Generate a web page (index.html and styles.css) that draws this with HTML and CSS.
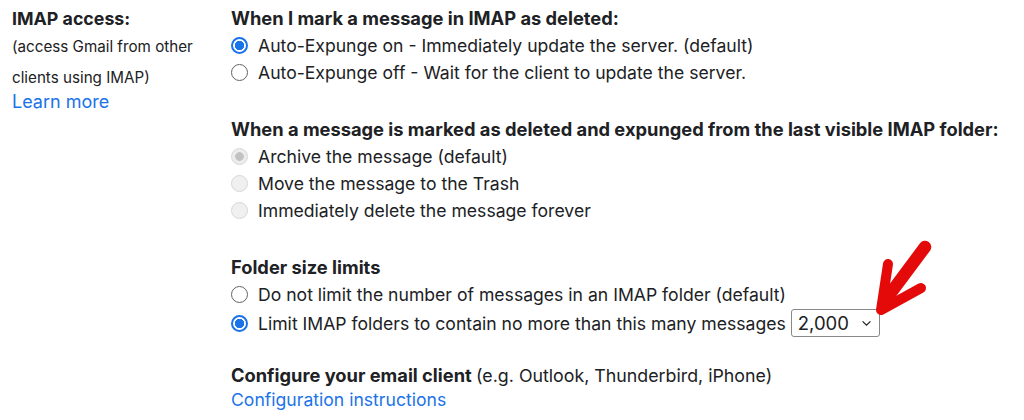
FILE: index.html
```html
<!DOCTYPE html>
<html lang="en">
<head>
<meta charset="utf-8">
<title>IMAP access</title>
<link rel="stylesheet" href="styles.css">
</head>
<body>
<div class="page">
  <div class="label-col">
    <div class="label-title">IMAP access:</div>
    <div class="label-sub">(access Gmail from other<br>clients using IMAP)</div>
    <a class="link learn" href="#">Learn more</a>
  </div>
  <div class="options-col">
    <div class="group">
      <div class="heading">When I mark a message in IMAP as deleted:</div>
      <label class="row"><input type="radio" name="g1" class="radio" checked><span>Auto-Expunge on - Immediately update the server. (default)</span></label>
      <label class="row"><input type="radio" name="g1" class="radio"><span>Auto-Expunge off - Wait for the client to update the server.</span></label>
    </div>
    <div class="group">
      <div class="heading">When a message is marked as deleted and expunged from the last visible IMAP folder:</div>
      <label class="row"><input type="radio" name="g2" class="radio" checked disabled><span>Archive the message (default)</span></label>
      <label class="row"><input type="radio" name="g2" class="radio" disabled><span>Move the message to the Trash</span></label>
      <label class="row"><input type="radio" name="g2" class="radio" disabled><span>Immediately delete the message forever</span></label>
    </div>
    <div class="group">
      <div class="heading">Folder size limits</div>
      <label class="row"><input type="radio" name="g3" class="radio"><span>Do not limit the number of messages in an IMAP folder (default)</span></label>
      <label class="row row-select"><input type="radio" name="g3" class="radio" checked><span>Limit IMAP folders to contain no more than this many messages</span>
        <span class="select">2,000<svg class="chev" viewBox="0 0 12 8" width="11" height="7"><path d="M1.5 1.5 L6 6 L10.5 1.5" fill="none" stroke="#202124" stroke-width="1.4"/></svg></span>
      </label>
    </div>
    <div class="group group-last">
      <div class="heading">Configure your email client <span class="normal">(e.g. Outlook, Thunderbird, iPhone)</span></div>
      <a class="link" href="#">Configuration instructions</a>
    </div>
  </div>
  <svg class="arrow" viewBox="0 0 80 90" width="80" height="90">
    <path d="M63 11 L22 66" fill="none" stroke="#e40a0a" stroke-width="12.5" stroke-linecap="round"/>
    <path d="M26 28 L19 74 L59 52" fill="none" stroke="#e40a0a" stroke-width="10" stroke-linecap="round" stroke-linejoin="round"/>
    <polygon points="21,56 19,74 38,64" fill="#e40a0a"/>
  </svg>
</div>
</body>
</html>
```
FILE: styles.css
```css
html, body {
  margin: 0;
  padding: 0;
  background: #ffffff;
}
body {
  font-family: Inter, Roboto, "Noto Sans", Arial, sans-serif;
  color: #202124;
  font-size: 17.6px;
}
.page {
  position: relative;
  display: grid;
  grid-template-columns: 231px 1fr;
  padding-top: 5px;
}
.label-col {
  padding-left: 12px;
  display: flex;
  flex-direction: column;
  align-items: flex-start;
}
.label-title {
  font-weight: 700;
  font-size: 17.8px;
  line-height: 27px;
}
.label-sub {
  font-size: 15.2px;
  line-height: 30.5px;
}
.link {
  color: #1a73e8;
  text-decoration: none;
  line-height: 22px;
}
.learn {
  font-size: 18px;
  margin-top: -2px;
}
.group {
  display: flex;
  flex-direction: column;
  align-items: flex-start;
  margin-bottom: 30px;
}
.group-last {
  margin-top: -6px;
}
.heading {
  font-weight: 700;
  font-size: 18.3px;
  line-height: 27px;
}
.heading .normal {
  font-weight: 400;
  font-size: 17.8px;
}
.row {
  display: flex;
  align-items: center;
  height: 27px;
  white-space: nowrap;
}
.row-select {
  height: 30px;
}
.radio {
  appearance: none;
  -webkit-appearance: none;
  width: 17px;
  height: 17px;
  margin: 0 10px 0 0;
  border-radius: 50%;
  border: 1.5px solid #5f6368;
  background: #fff;
  box-sizing: border-box;
  flex: none;
}
.radio:checked {
  border: 2px solid #1a73e8;
  background: radial-gradient(circle, #1a73e8 0 4.4px, #fff 5px);
}
.radio:disabled {
  border: 1.5px solid #d7d7d7;
  background: #f0f0f0;
}
.radio:disabled:checked {
  background: radial-gradient(circle, #c2c2c2 0 4px, #ececec 4.6px);
}
.select {
  display: inline-flex;
  align-items: center;
  justify-content: space-between;
  width: 89px;
  height: 28px;
  box-sizing: border-box;
  margin-left: 5px;
  padding: 0 7px 0 6px;
  border: 1px solid #888888;
  border-radius: 3px;
  font-size: 18.5px;
}
.chev {
  margin-top: 1px;
}
.arrow {
  position: absolute;
  left: 862px;
  top: 236px;
}
```
